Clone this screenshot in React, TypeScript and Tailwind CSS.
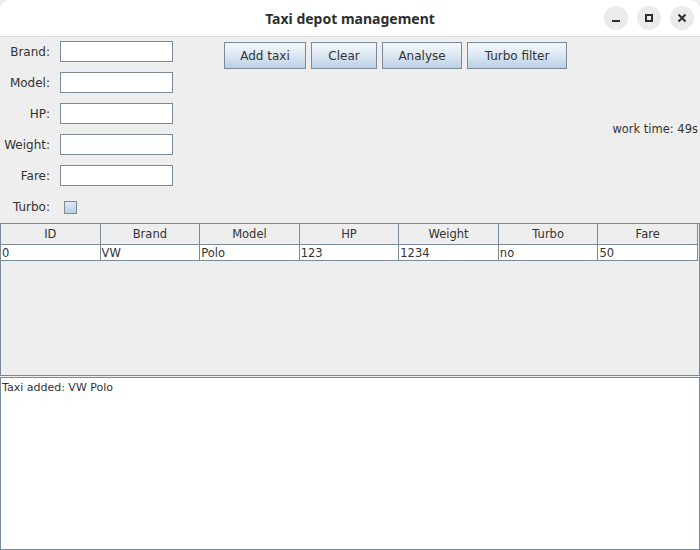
import React from "react";

const fieldLabels = ["Brand:", "Model:", "HP:", "Weight:", "Fare:"];
const columns = ["ID", "Brand", "Model", "HP", "Weight", "Turbo", "Fare"];
const rows = [["0", "VW", "Polo", "123", "1234", "no", "50"]];
const buttons = [
  { label: "Add taxi", w: "w-[82px]" },
  { label: "Clear", w: "w-[66px]" },
  { label: "Analyse", w: "w-[80px]" },
  { label: "Turbo filter", w: "w-[100px]" },
];

const swing = { fontFamily: '"DejaVu Sans", "Noto Sans", sans-serif' };

const TitleButton = ({ kind }: { kind: "min" | "max" | "close" }) => (
  <div className="flex h-[24px] w-[24px] items-center justify-center rounded-full bg-[#ebebeb]">
    {kind === "min" && <div className="mt-[6px] h-[2px] w-[8px] bg-[#2e2e2e]" />}
    {kind === "max" && <div className="h-[8px] w-[8px] border-2 border-[#2e2e2e]" />}
    {kind === "close" && (
      <svg width="10" height="10" viewBox="0 0 10 10">
        <path d="M1.5 1.5L8.5 8.5M8.5 1.5L1.5 8.5" stroke="#2e2e2e" strokeWidth="2" />
      </svg>
    )}
  </div>
);

export default function App() {
  return (
    <div className="flex h-[550px] w-[700px] flex-col overflow-hidden bg-[#eeeeee] text-[12px] text-[#333333]" style={swing}>
      {/* header bar */}
      <div className="relative flex h-[37px] shrink-0 items-center justify-center rounded-t-[10px] border-b border-[#dcdcdc] bg-white">
        <span className="text-[14px] font-bold text-[#2e2e2e]" style={{ fontFamily: '"Noto Sans", Inter, sans-serif' }}>
          Taxi depot management
        </span>
        <div className="absolute right-[6px] top-[6px] flex gap-[9px]">
          <TitleButton kind="min" />
          <TitleButton kind="max" />
          <TitleButton kind="close" />
        </div>
      </div>

      {/* form + actions */}
      <div className="flex h-[186px] shrink-0">
        <div className="flex flex-col pt-[4px]">
          {fieldLabels.map((l) => (
            <div key={l} className="mb-[10px] flex h-[21px] items-center">
              <span className="w-[50px] text-right">{l}</span>
              <div className="ml-[10px] h-[21px] w-[113px] border border-[#7a8a99] bg-white" />
            </div>
          ))}
          <div className="mt-[4px] flex h-[14px] items-center">
            <span className="w-[50px] text-right">Turbo:</span>
            <div className="ml-[14px] h-[13px] w-[13px] border border-[#7a8a99] bg-gradient-to-b from-[#dde8f3] to-[#b8cfe5]" />
          </div>
        </div>
        <div className="ml-[51px] mt-[5px] flex h-[27px] gap-[5px]">
          {buttons.map((b) => (
            <div
              key={b.label}
              className={`${b.w} flex h-[27px] items-center justify-center border border-[#7a8a99] bg-gradient-to-b from-[#f3f7fb] via-[#dde8f3] to-[#b8cfe5] text-[#333333]`}
            >
              {b.label}
            </div>
          ))}
        </div>
        <div className="flex flex-1 items-center justify-end pr-[2px]">
          <span className="text-[11.5px]">work time: 49s</span>
        </div>
      </div>

      {/* table */}
      <div className="flex h-[153px] shrink-0 flex-col border border-[#7a8a99] text-[11.5px]">
        <div className="grid h-[21px] w-[697px] grid-cols-7 border-b border-[#7a8a99]">
          {columns.map((c) => (
            <div key={c} className="flex items-center justify-center border-r border-[#7a8a99] bg-[#eeeeee] pt-[2px]">
              {c}
            </div>
          ))}
        </div>
        {rows.map((r) => (
          <div key={r[0]} className="grid h-[16px] w-[697px] grid-cols-7 bg-white">
            {r.map((v, i) => (
              <div key={i} className="flex items-center border-b border-r border-[#7a8a99] pl-[1px] pt-[2px] leading-none text-[#333333]">
                {v}
              </div>
            ))}
          </div>
        ))}
        <div className="flex-1" />
      </div>

      {/* log */}
      <div className="mt-[1px] flex-1 border border-[#7a8a99] bg-white pl-[1px] pt-[2px] text-[11px] text-[#333333]">
        Taxi added: VW Polo
      </div>
    </div>
  );
}
